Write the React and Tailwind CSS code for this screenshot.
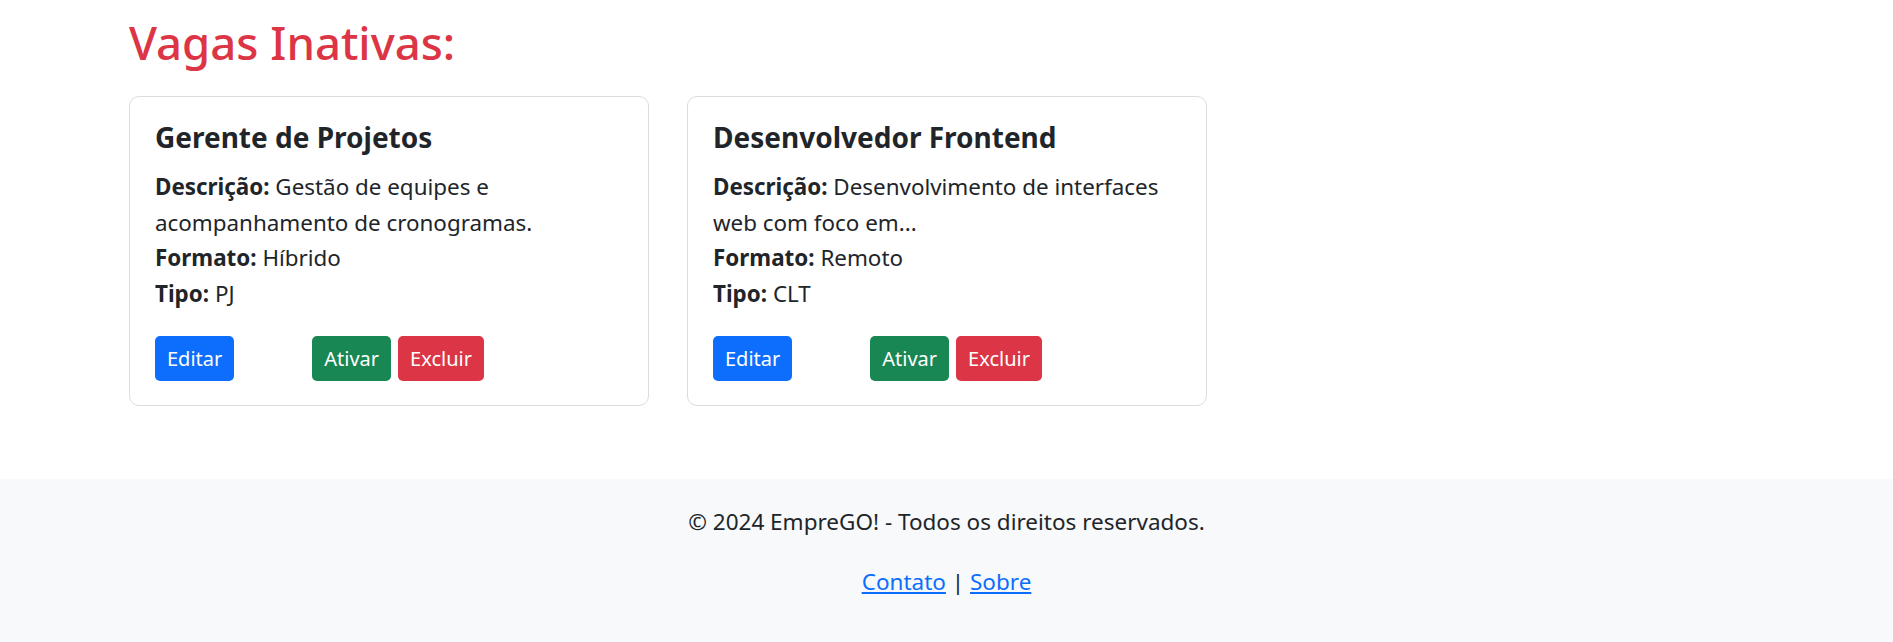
import React from 'react';

const vagas = [
  {
    id: 1,
    titulo: 'Gerente de Projetos',
    descricao: 'Gestão de equipes e acompanhamento de cronogramas.',
    formato: 'Híbrido',
    tipo: 'PJ',
  },
  {
    id: 2,
    titulo: 'Desenvolvedor Frontend',
    descricao: 'Desenvolvimento de interfaces web com foco em...',
    formato: 'Remoto',
    tipo: 'CLT',
  },
];

const VagaCard = ({ vaga }) => (
  <div className="w-[520px] border border-[#dcdcdc] rounded-[10px] px-[25px] pt-[23px] pb-[24px] bg-white">
    <h5 className="text-[28px] leading-[34px] font-bold mb-[15px]">{vaga.titulo}</h5>
    <div className="text-[22.4px] leading-[35.5px]">
      <p>
        <strong>Descrição:</strong> {vaga.descricao}
      </p>
      <p>
        <strong>Formato:</strong> {vaga.formato}
      </p>
      <p>
        <strong>Tipo:</strong> {vaga.tipo}
      </p>
    </div>
    <div className="flex items-center mt-[25px]">
      <button className="h-[45px] px-[12px] rounded-[5px] bg-[#0d6efd] text-white text-[20px] leading-[45px] mr-[78px]">
        Editar
      </button>
      <button className="h-[45px] px-[12px] rounded-[5px] bg-[#198754] text-white text-[20px] leading-[45px] mr-[7px]">
        Ativar
      </button>
      <button className="h-[45px] px-[12px] rounded-[5px] bg-[#dc3545] text-white text-[20px] leading-[45px]">
        Excluir
      </button>
    </div>
  </div>
);

export default function App() {
  return (
    <div className="min-h-screen bg-white text-[#212529] font-['Noto_Sans',sans-serif]">
      <div className="px-[129px] pt-[12px] pb-[73px]">
        <h1 className="text-[45.5px] leading-[60px] font-medium text-[#dc3545] mb-[24px]">
          Vagas Inativas:
        </h1>
        <div className="flex gap-[38px]">
          {vagas.map((vaga) => (
            <VagaCard key={vaga.id} vaga={vaga} />
          ))}
        </div>
      </div>

      <footer className="bg-[#f8f9fa] text-center text-[22.5px] leading-[36px] pt-[25px] pb-[43px]">
        <p className="mb-[24px]">© 2024 EmpreGO! - Todos os direitos reservados.</p>
        <p>
          <a href="#" className="text-[#0d6efd] underline">Contato</a> |{' '}
          <a href="#" className="text-[#0d6efd] underline">Sobre</a>
        </p>
      </footer>
    </div>
  );
}
